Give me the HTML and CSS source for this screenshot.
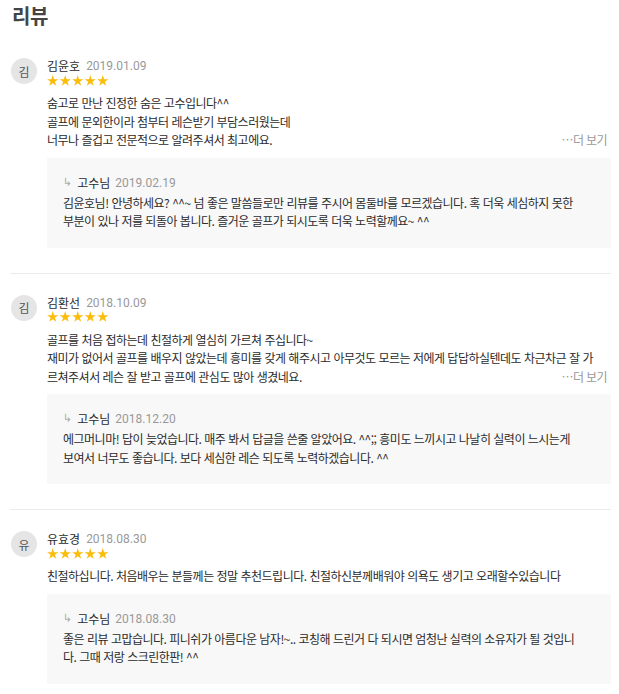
FILE: index.html
```html
<!DOCTYPE html>
<html lang="ko">
<head>
<meta charset="utf-8">
<title>리뷰</title>
<link rel="stylesheet" href="styles.css">
</head>
<body>
<section class="reviews">
  <h2 class="title">리뷰</h2>
  <ul class="list">
    <li class="review">
      <div class="avatar">김</div>
      <div class="body">
        <div class="meta"><span class="name">김윤호</span><span class="date">2019.01.09</span></div>
        <div class="stars">
          <svg class="star-row" width="63" height="11" viewBox="0 0 63 11"><g fill="#fbbc0a"><path d="M5.75 .1L7.07 4.18H11.36L7.89 6.7 9.22 10.77 5.75 8.25 2.28 10.77 3.61 6.7 .14 4.18H4.43z"/><path transform="translate(12.5 0)" d="M5.75 .1L7.07 4.18H11.36L7.89 6.7 9.22 10.77 5.75 8.25 2.28 10.77 3.61 6.7 .14 4.18H4.43z"/><path transform="translate(25 0)" d="M5.75 .1L7.07 4.18H11.36L7.89 6.7 9.22 10.77 5.75 8.25 2.28 10.77 3.61 6.7 .14 4.18H4.43z"/><path transform="translate(37.5 0)" d="M5.75 .1L7.07 4.18H11.36L7.89 6.7 9.22 10.77 5.75 8.25 2.28 10.77 3.61 6.7 .14 4.18H4.43z"/><path transform="translate(50 0)" d="M5.75 .1L7.07 4.18H11.36L7.89 6.7 9.22 10.77 5.75 8.25 2.28 10.77 3.61 6.7 .14 4.18H4.43z"/></g></svg>
        </div>
        <div class="content">
          <p class="text">숨고로 만난 진정한 숨은 고수입니다^^<br>골프에 문외한이라 첨부터 레슨받기 부담스러웠는데<br>너무나 즐겁고 전문적으로 알려주셔서 최고에요.</p>
          <span class="more">…더 보기</span>
        </div>
        <div class="reply">
          <div class="reply-meta"><span class="arrow">↳</span><span class="reply-name">고수님</span><span class="date">2019.02.19</span></div>
          <p class="text">김윤호님! 안녕하세요? ^^~ 넘 좋은 말씀들로만 리뷰를 주시어 몸둘바를 모르겠습니다. 혹 더욱 세심하지 못한<br>부분이 있나 저를 되돌아 봅니다. 즐거운 골프가 되시도록 더욱 노력할께요~ ^^</p>
        </div>
      </div>
    </li>
    <li class="review">
      <div class="avatar">김</div>
      <div class="body">
        <div class="meta"><span class="name">김환선</span><span class="date">2018.10.09</span></div>
        <div class="stars">
          <svg class="star-row" width="63" height="11" viewBox="0 0 63 11"><g fill="#fbbc0a"><path d="M5.75 .1L7.07 4.18H11.36L7.89 6.7 9.22 10.77 5.75 8.25 2.28 10.77 3.61 6.7 .14 4.18H4.43z"/><path transform="translate(12.5 0)" d="M5.75 .1L7.07 4.18H11.36L7.89 6.7 9.22 10.77 5.75 8.25 2.28 10.77 3.61 6.7 .14 4.18H4.43z"/><path transform="translate(25 0)" d="M5.75 .1L7.07 4.18H11.36L7.89 6.7 9.22 10.77 5.75 8.25 2.28 10.77 3.61 6.7 .14 4.18H4.43z"/><path transform="translate(37.5 0)" d="M5.75 .1L7.07 4.18H11.36L7.89 6.7 9.22 10.77 5.75 8.25 2.28 10.77 3.61 6.7 .14 4.18H4.43z"/><path transform="translate(50 0)" d="M5.75 .1L7.07 4.18H11.36L7.89 6.7 9.22 10.77 5.75 8.25 2.28 10.77 3.61 6.7 .14 4.18H4.43z"/></g></svg>
        </div>
        <div class="content">
          <p class="text">골프를 처음 접하는데 친절하게 열심히 가르쳐 주십니다~<br>재미가 없어서 골프를 배우지 않았는데 흥미를 갖게 해주시고 아무것도 모르는 저에게 답답하실텐데도 차근차근 잘 가<br>르쳐주셔서 레슨 잘 받고 골프에 관심도 많아 생겼네요.</p>
          <span class="more">…더 보기</span>
        </div>
        <div class="reply">
          <div class="reply-meta"><span class="arrow">↳</span><span class="reply-name">고수님</span><span class="date">2018.12.20</span></div>
          <p class="text">에그머니마! 답이 늦었습니다. 매주 봐서 답글을 쓴줄 알았어요. ^^;; 흥미도 느끼시고 나날히 실력이 느시는게<br>보여서 너무도 좋습니다. 보다 세심한 레슨 되도록 노력하겠습니다. ^^</p>
        </div>
      </div>
    </li>
    <li class="review">
      <div class="avatar">유</div>
      <div class="body">
        <div class="meta"><span class="name">유효경</span><span class="date">2018.08.30</span></div>
        <div class="stars">
          <svg class="star-row" width="63" height="11" viewBox="0 0 63 11"><g fill="#fbbc0a"><path d="M5.75 .1L7.07 4.18H11.36L7.89 6.7 9.22 10.77 5.75 8.25 2.28 10.77 3.61 6.7 .14 4.18H4.43z"/><path transform="translate(12.5 0)" d="M5.75 .1L7.07 4.18H11.36L7.89 6.7 9.22 10.77 5.75 8.25 2.28 10.77 3.61 6.7 .14 4.18H4.43z"/><path transform="translate(25 0)" d="M5.75 .1L7.07 4.18H11.36L7.89 6.7 9.22 10.77 5.75 8.25 2.28 10.77 3.61 6.7 .14 4.18H4.43z"/><path transform="translate(37.5 0)" d="M5.75 .1L7.07 4.18H11.36L7.89 6.7 9.22 10.77 5.75 8.25 2.28 10.77 3.61 6.7 .14 4.18H4.43z"/><path transform="translate(50 0)" d="M5.75 .1L7.07 4.18H11.36L7.89 6.7 9.22 10.77 5.75 8.25 2.28 10.77 3.61 6.7 .14 4.18H4.43z"/></g></svg>
        </div>
        <div class="content">
          <p class="text">친절하십니다. 처음배우는 분들께는 정말 추천드립니다. 친절하신분께배워야 의욕도 생기고 오래할수있습니다</p>
        </div>
        <div class="reply">
          <div class="reply-meta"><span class="arrow">↳</span><span class="reply-name">고수님</span><span class="date">2018.08.30</span></div>
          <p class="text">좋은 리뷰 고맙습니다. 피니쉬가 아름다운 남자!~.. 코칭해 드린거 다 되시면 엄청난 실력의 소유자가 될 것입니<br>다. 그때 저랑 스크린한판! ^^</p>
        </div>
      </div>
    </li>
  </ul>
</section>
</body>
</html>
```

FILE: styles.css
```css
html, body {
  margin: 0;
  padding: 0;
  background: #ffffff;
}

body {
  font-family: "Noto Sans CJK KR", "Noto Sans", sans-serif;
  color: #333333;
  font-size: 12px;
}

.reviews {
  padding: 0 8px 0 10px;
}

.title {
  margin: 0;
  padding: 4px 0 0 2px;
  font-size: 20px;
  line-height: 24px;
  font-weight: 700;
  color: #444444;
  letter-spacing: -0.5px;
}

.list {
  list-style: none;
  margin: 9px 0 0;
  padding: 0;
}

.review {
  display: flex;
  gap: 10px;
  padding: 22px 0 25px 1px;
  border-bottom: 1px solid #ebebeb;
}

.review:last-child {
  border-bottom: none;
}

.avatar {
  flex: none;
  width: 26px;
  height: 26px;
  margin-top: -1px;
  border-radius: 50%;
  background: #e5e5e5;
  color: #555555;
  font-size: 12px;
  display: flex;
  align-items: center;
  justify-content: center;
}

.body {
  flex: 1;
  min-width: 0;
}

.meta {
  display: flex;
  align-items: center;
  gap: 6px;
  height: 14px;
  line-height: 14px;
}

.name {
  font-size: 12px;
  color: #2b2b2b;
  letter-spacing: 0;
}

.date {
  font-family: Roboto, "Liberation Sans", sans-serif;
  font-size: 12px;
  color: #999999;
}

.stars {
  height: 14px;
}

.star-row {
  display: block;
  margin-top: 1.5px;
}

.content {
  display: grid;
  margin-top: 5.5px;
}

.content > * {
  grid-area: 1 / 1;
}

.text {
  margin: 0;
  font-size: 12px;
  line-height: 18.5px;
  letter-spacing: -0.5px;
  word-spacing: 0;
  white-space: nowrap;
  color: #2b2b2b;
}

.more {
  justify-self: end;
  align-self: end;
  line-height: 18.5px;
  font-size: 12px;
  color: #999999;
  padding-right: 4px;
  letter-spacing: -0.6px;
}

.reply {
  margin-top: 8px;
  background: #f8f8f8;
  padding: 17px 16px 17px;
}

.reply-meta {
  display: flex;
  align-items: center;
  gap: 5px;
  height: 16px;
  line-height: 16px;
  margin-bottom: 3px;
}

.arrow {
  font-family: "DejaVu Sans", sans-serif;
  font-size: 11px;
  color: #aaaaaa;
}

.reply-name {
  font-size: 12px;
  color: #2b2b2b;
  letter-spacing: 0;
}
```
